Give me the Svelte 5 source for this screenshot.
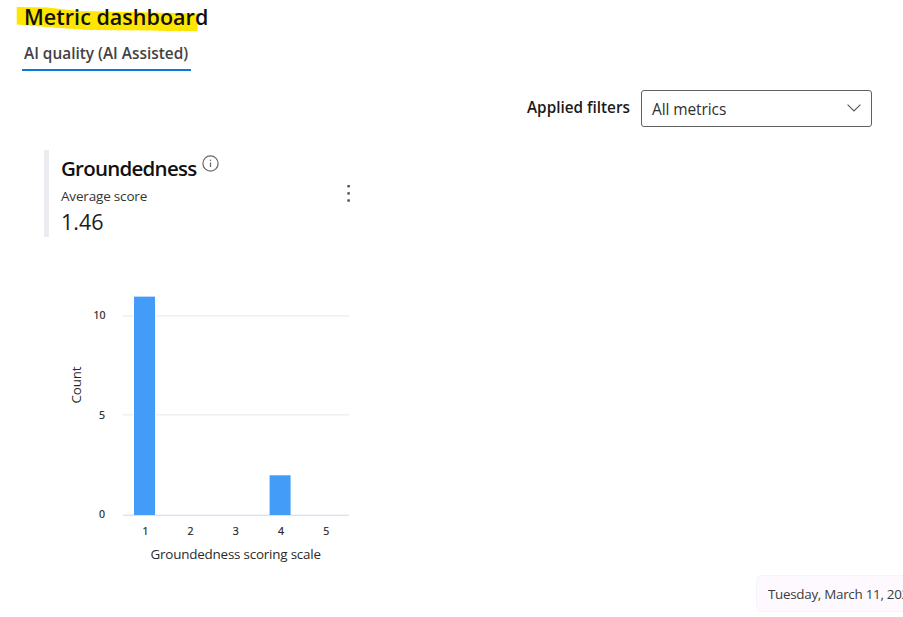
<script>
  const bars = [
    { label: '1', value: 11 },
    { label: '2', value: 0 },
    { label: '3', value: 0 },
    { label: '4', value: 2 },
    { label: '5', value: 0 }
  ];
  const ticks = [10, 5, 0];
  const base = 235;
  const y = (v) => base - v * 19.85;
  const x = (i) => 101 + i * 45.2;
</script>

<main>
  <header>
    <h1>
      <svg class="marker" width="184" height="27" viewBox="0 0 184 27" aria-hidden="true">
        <path d="M.7 1 L32 1.5 L62 5 L181.5 7.5 V25 H153 L133 24.5 L73 24 L43 22 L.7 18.5 Z" fill="#ffe600" />
      </svg>
      <span>Metric dashboard</span>
    </h1>
    <nav><button class="tab">AI quality (AI Assisted)</button></nav>
  </header>

  <section class="filters">
    <span class="label">Applied filters</span>
    <button class="select">
      <span>All metrics</span>
      <svg width="14" height="8" viewBox="0 0 14 8" fill="none" stroke="#555" stroke-width="1.1">
        <path d="M.6 .7 7 7 13.4 .7" />
      </svg>
    </button>
  </section>

  <section class="metric">
    <div class="info">
      <div class="name">
        <h2>Groundedness</h2>
        <svg width="17" height="17" viewBox="0 0 17 17" fill="none" stroke="#6b6b6b" stroke-width="1.25">
          <circle cx="8.5" cy="8.5" r="7.6" />
          <path d="M8.5 7.4V12" />
          <circle cx="8.5" cy="5.2" r=".8" fill="#6b6b6b" stroke="none" />
        </svg>
      </div>
      <p class="sub">Average score</p>
      <p class="score">1.46</p>
    </div>
    <button class="more" aria-label="More">
      <svg width="4" height="18" viewBox="0 0 4 18" fill="#4a4a52">
        <rect x=".4" y="0" width="2.4" height="2.4" />
        <rect x=".4" y="7.2" width="2.4" height="2.4" />
        <rect x=".4" y="14.3" width="2.4" height="2.4" />
      </svg>
    </button>
  </section>

  <svg class="chart" width="310" height="300" viewBox="0 0 310 300">
    {#each ticks as t}
      <rect x="79" y={Math.floor(y(t)) - 1 + (t === 0 ? 0.6 : 0)} width="226" height="1.5" fill={t === 0 ? '#dfe1f0' : '#f0f0f1'} />
      <text class="tick" x={t === 10 ? 55.5 : 58} y={y(t) + 2.9} text-anchor="middle">{t}</text>
    {/each}
    {#each bars as b, i}
      {#if b.value}
        <rect x={x(i) - 12} y={y(b.value) - 1} width="23" height={base - y(b.value)} fill="#fff" />
        <rect x={x(i) - 11} y={y(b.value)} width="21" height={base - y(b.value)} fill="#439df8" />
      {/if}
      <text class="tick" x={x(i) + 0.4} y="255.3" text-anchor="middle">{b.label}</text>
    {/each}
    <text class="axis" transform="translate(37 105) rotate(-90)" text-anchor="middle" textLength="37">Count</text>
    <text class="axis" x="106.5" y="279.2" textLength="170.5">Groundedness scoring scale</text>
  </svg>

  <aside>Tuesday, March 11, 2025</aside>
</main>

<style>
  :global(body) { background: #fff; }
  main {
    box-sizing: border-box;
    width: 903px;
    height: 617px;
    overflow: hidden;
    display: flex;
    flex-direction: column;
    font-family: "Open Sans", "Noto Sans", sans-serif;
    color: #1f1f1f;
    white-space: nowrap;
  }
  h1, h2, p { margin: 0; }
  button { background: none; border: 0; padding: 0; font: inherit; color: inherit; text-align: left; }
  header { height: 72px; flex: none; }
  h1 {
    position: relative;
    height: 34px;
    padding-left: 24px;
    font-size: 21.5px;
    line-height: 33px;
    font-weight: 600;
    letter-spacing: 0.03px;
    color: #111;
  }
  .marker { position: absolute; left: 16px; top: 6px; }
  h1 span { position: relative; }
  nav { padding-left: 22px; display: flex; }
  .tab {
    box-sizing: border-box;
    width: 169px;
    height: 37px;
    padding: 2px 0 0 2px;
    border-bottom: 2px solid #0f78d4;
    font-size: 15.4px;
    line-height: 35px;
    font-weight: 600;
    color: #424242;
  }
  .filters {
    flex: none;
    display: flex;
    align-items: center;
    height: 37px;
    margin-top: 18px;
    padding-left: 527px;
  }
  .label { width: 114px; font-size: 15.3px; font-weight: 600; line-height: 34px; height: 37px; color: #1b1b1b; }
  .select {
    box-sizing: border-box;
    width: 231px;
    height: 37px;
    padding: 1px 10px 0 10px;
    border: 1.4px solid #616161;
    border-radius: 3px;
    display: flex;
    align-items: center;
    justify-content: space-between;
    font-size: 15.5px;
    letter-spacing: -0.1px;
    color: #303030;
  }
  .select svg { margin-top: -2px; }
  .metric {
    flex: none;
    box-sizing: border-box;
    display: flex;
    justify-content: space-between;
    width: 307px;
    height: 87px;
    margin: 23px 0 0 44px;
    border-left: 5px solid #eeebf0;
    padding-left: 12px;
  }
  .name { display: flex; height: 37px; gap: 6px; }
  .name svg { margin-top: 5px; }
  h2 { width: 135px; font-size: 20.5px; line-height: 37px; font-weight: 600; letter-spacing: -0.75px; color: #111; }
  .sub { font-size: 13.5px; line-height: 19px; height: 20px; letter-spacing: -0.18px; color: #333; }
  .score { font-size: 21.5px; line-height: 30px; color: #1c1c1c; }
  .more { margin-top: 35px; height: 18px; }
  .more svg { display: block; }
  .chart { flex: none; display: block; margin: 43px 0 0 44px; }
  .tick { font-size: 10.5px; fill: #222; stroke: #222; stroke-width: 0.2px; }
  .axis { font-size: 13.4px; fill: #2a2a2a; }
  aside {
    flex: none;
    align-self: flex-end;
    box-sizing: border-box;
    width: 147px;
    height: 37px;
    margin-top: -5px;
    padding-left: 11px;
    border: 1px solid #f8f3fa;
    border-right: 0;
    border-radius: 6px 0 0 6px;
    background: #fdf9fe;
    overflow: hidden;
    font-size: 13.4px;
    letter-spacing: -0.28px;
    line-height: 36px;
    color: #3c3c3c;
  }
</style>
